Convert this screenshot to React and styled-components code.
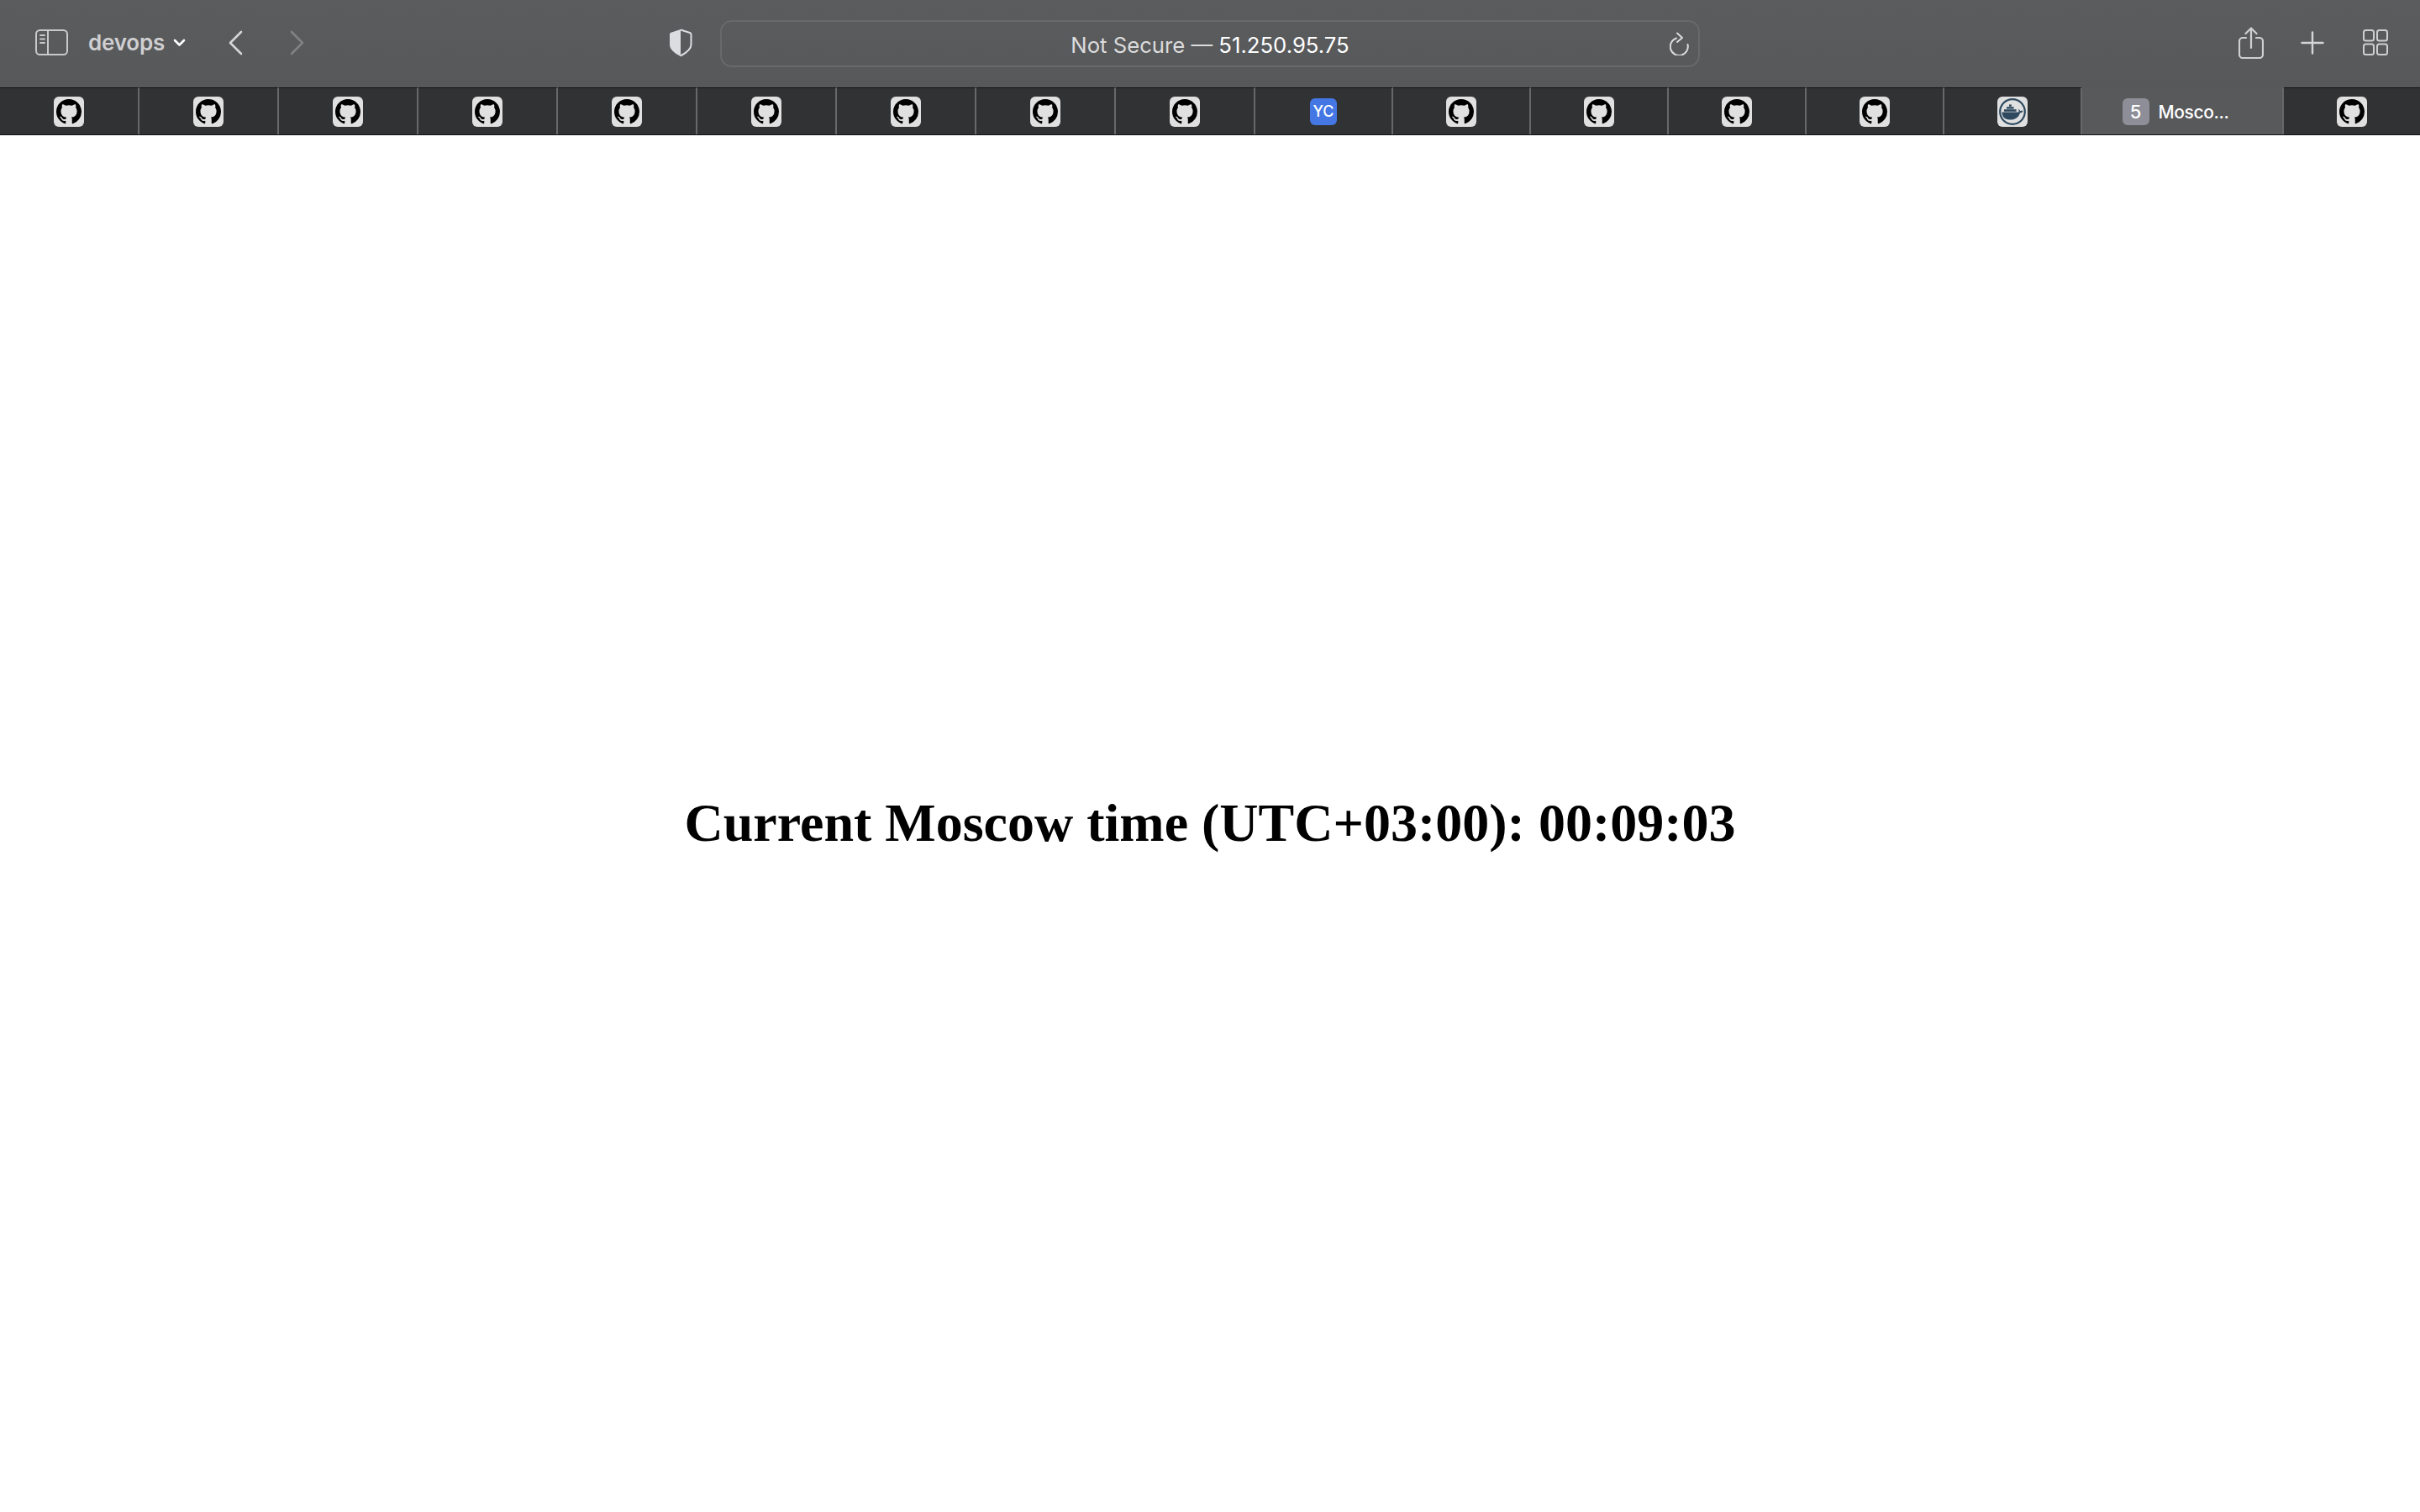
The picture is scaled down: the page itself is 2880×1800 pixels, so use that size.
import React from 'react';
import styled, { createGlobalStyle } from 'styled-components';

const GlobalStyle = createGlobalStyle`
  html, body {
    margin: 0;
    padding: 0;
    background: #fff;
  }
  * {
    box-sizing: border-box;
  }
`;

const Page = styled.div`
  display: flex;
  flex-direction: column;
  width: 2880px;
  height: 1800px;
  overflow: hidden;
  font-family: Inter, "Liberation Sans", sans-serif;
`;

const Toolbar = styled.header`
  display: grid;
  grid-template-columns: 857px 1166px 1fr;
  align-items: center;
  height: 104px;
  background: linear-gradient(#5b5c5e, #57585a);
`;

const LeftGroup = styled.div`
  display: flex;
  align-items: center;
  padding-left: 42px;
  padding-bottom: 3px;
`;

const GroupName = styled.span`
  margin-left: 24px;
  font-size: 26px;
  font-weight: 600;
  color: #cfcfd1;
  letter-spacing: -0.2px;
`;

const NavIcon = styled.svg`
  display: block;
  flex: none;
  margin-left: ${(p) => p.$gap}px;
`;

const ShieldIcon = styled.svg`
  display: block;
  margin-left: auto;
  margin-right: 33px;
`;

const AddressBar = styled.div`
  position: relative;
  display: flex;
  align-items: center;
  justify-content: center;
  height: 56px;
  padding-top: 2px;
  border: 2px solid #69696c;
  border-radius: 14px;
  font-size: 25.7px;
  color: #dcdcdd;
`;

const Host = styled.span`
  color: #fff;
`;

const ReloadButton = styled.svg`
  position: absolute;
  right: 10px;
  top: 12px;
`;

const RightGroup = styled.div`
  display: flex;
  align-items: center;
  padding-left: 641px;
  padding-bottom: 3px;
`;

const TabBar = styled.nav`
  display: flex;
  height: 57px;
  background: #313234;
  border-bottom: 1px solid #111;
`;

const Tab = styled.div`
  display: flex;
  flex: none;
  align-items: center;
  justify-content: center;
  gap: 11px;
  width: ${(p) => p.$width}px;
  padding-top: 9px;
  padding-bottom: 9px;
  padding-right: ${(p) => (p.$active ? 16 : 0)}px;
  border-top: 1px solid ${(p) => (p.$active ? '#58595b' : '#111')};
  border-right: 2px solid ${(p) => (p.$last ? 'transparent' : '#68686a')};
  background: ${(p) => (p.$active ? '#58595b' : 'transparent')};
`;

const Favicon = styled.span`
  display: flex;
  align-items: center;
  justify-content: center;
  width: 36px;
  height: 36px;
  border-radius: 6px;
  background: #e0e0e0;
`;

const LetterIcon = styled.span`
  display: flex;
  align-items: center;
  justify-content: center;
  width: 32px;
  height: 32px;
  border-radius: 6px;
  background: ${(p) => p.$bg};
  color: #fff;
  font-size: ${(p) => p.$size}px;
  font-weight: 500;
`;

const TabTitle = styled.span`
  padding-top: 1px;
  font-size: 21px;
  font-weight: 500;
  letter-spacing: -0.4px;
  color: #fff;
`;

const Content = styled.main`
  display: flex;
  flex: 1;
  align-items: center;
  justify-content: center;
  padding-bottom: 2px;
  background: #fff;
`;

const Clock = styled.h1`
  margin: 0;
  font-family: "Liberation Serif", "Times New Roman", serif;
  font-size: 64px;
  font-weight: 700;
  color: #000;
`;

const GITHUB_PATH =
  'M8 0C3.58 0 0 3.58 0 8c0 3.54 2.29 6.53 5.47 7.59.4.07.55-.17.55-.38 0-.19-.01-.82-.01-1.49-2.01.37-2.53-.49-2.69-.94-.09-.23-.48-.94-.82-1.13-.28-.15-.68-.52-.01-.53.63-.01 1.08.58 1.23.82.72 1.21 1.87.87 2.33.66.07-.52.28-.87.51-1.07-1.78-.2-3.64-.89-3.64-3.95 0-.87.31-1.59.82-2.15-.08-.2-.36-1.02.08-2.12 0 0 .67-.21 2.2.82.64-.18 1.32-.27 2-.27.68 0 1.36.09 2 .27 1.53-1.04 2.2-.82 2.2-.82.44 1.1.16 1.92.08 2.12.51.56.82 1.27.82 2.15 0 3.07-1.87 3.75-3.65 3.95.29.25.54.73.54 1.48 0 1.07-.01 1.93-.01 2.2 0 .21.15.46.55.38A8.013 8.013 0 0016 8c0-4.42-3.58-8-8-8z';

const GithubFavicon = () => (
  <Favicon>
    <svg width="30" height="30" viewBox="0 0 16 16">
      <path d={GITHUB_PATH} fill="#000" />
    </svg>
  </Favicon>
);

const DockerFavicon = () => (
  <Favicon>
    <svg width="36" height="36" viewBox="0 0 36 36">
      <circle cx="18" cy="18" r="14.8" fill="none" stroke="#2f4a5f" strokeWidth="2.2" />
      <g fill="#2f4a5f">
        <path d="M5.5 18.6h20c.3-1.4.1-2.8-.8-3.9 1.1.4 2.2 1.3 2.7 2.5 1-.5 2.2-.5 3.1 0-.7 1.5-1.9 2.2-3.5 2.2C25.6 24.6 21 27.6 14.6 27.6 8.6 27.6 5.5 23.8 5.5 18.6z" />
        <rect x="8" y="15.2" width="14.6" height="2.6" />
        <rect x="11" y="12.2" width="8.6" height="2.4" />
        <rect x="14" y="9.4" width="2.8" height="2.4" />
      </g>
    </svg>
  </Favicon>
);

const SidebarIcon = () => (
  <NavIcon $gap={0} width="39" height="31" viewBox="0 0 39 31" fill="none" stroke="#c9c9cb" strokeWidth="2">
    <rect x="1" y="1" width="37" height="29" rx="4.5" />
    <path d="M15 1v29" />
    <path d="M6 7h5M6 11.5h5M6 16h5" strokeLinecap="round" />
  </NavIcon>
);

const tabs = [
  ...Array.from({ length: 9 }, () => ({ kind: 'github', width: 166 })),
  { kind: 'yc', width: 164 },
  ...Array.from({ length: 4 }, () => ({ kind: 'github', width: 164 })),
  { kind: 'docker', width: 164 },
  { kind: 'active', width: 240 },
  { kind: 'github', width: 163 },
];

const renderTabIcon = (kind) => {
  if (kind === 'yc') return <LetterIcon $bg="#4477e4" $size={18}>YC</LetterIcon>;
  if (kind === 'docker') return <DockerFavicon />;
  if (kind === 'active') {
    return (
      <>
        <LetterIcon $bg="#8e8e98" $size={22}>5</LetterIcon>
        <TabTitle>Mosco...</TabTitle>
      </>
    );
  }
  return <GithubFavicon />;
};

export default function App() {
  return (
    <Page>
      <GlobalStyle />
      <Toolbar>
        <LeftGroup>
          <SidebarIcon />
          <GroupName>devops</GroupName>
          <NavIcon $gap={10} width="15" height="10" viewBox="0 0 15 10" fill="none" stroke="#fff" strokeWidth="2.6" strokeLinecap="round" strokeLinejoin="round">
            <path d="M2 2l5.5 5.5L13 2" />
          </NavIcon>
          <NavIcon $gap={50} width="18" height="30" viewBox="0 0 18 30" fill="none" stroke="#d6d6d8" strokeWidth="2.6" strokeLinecap="round" strokeLinejoin="round">
            <path d="M16 2L3 15l13 13" />
          </NavIcon>
          <NavIcon $gap={56} width="18" height="30" viewBox="0 0 18 30" fill="none" stroke="#818284" strokeWidth="2.6" strokeLinecap="round" strokeLinejoin="round">
            <path d="M2 2l13 13L2 28" />
          </NavIcon>
          <ShieldIcon width="28" height="34" viewBox="0 0 28 34">
            <path d="M14 1.5L25 5c1 .3 1.5 1 1.5 2v12c0 5-5 9.500-12.500 13.500" fill="none" stroke="#dcdde0" strokeWidth="2" />
            <path d="M14 1L2.500 4.700C1.500 5 1 5.700 1 6.700V19c0 5.500 5 10 13 14z" fill="#dcdde0" />
          </ShieldIcon>
        </LeftGroup>

        <AddressBar>
          <span>
            Not Secure — <Host>51.250.95.75</Host>
          </span>
          <ReloadButton width="24" height="28" viewBox="0 0 24 28" fill="none" stroke="#dcdcdd" strokeWidth="2" strokeLinecap="round" strokeLinejoin="round">
            <path d="M8 7.500A10.500 10.500 0 1 0 21.500 15" />
            <path d="M9 1.500l6 5.500-6 5" />
          </ReloadButton>
        </AddressBar>

        <RightGroup>
          <NavIcon $gap={0} width="30" height="38" viewBox="0 0 30 38" fill="none" stroke="#d0d0d2" strokeWidth="2.200" strokeLinecap="round" strokeLinejoin="round">
            <path d="M9 13H5a4 4 0 0 0-4 4v16a4 4 0 0 0 4 4h20a4 4 0 0 0 4-4V17a4 4 0 0 0-4-4h-4" />
            <path d="M15 25V2M8.500 8L15 1.500 21.500 8" />
          </NavIcon>
          <NavIcon $gap={44} width="28" height="28" viewBox="0 0 28 28" fill="none" stroke="#d6d6d8" strokeWidth="2.400" strokeLinecap="round">
            <path d="M14 1.500v25M1.500 14h25" />
          </NavIcon>
          <NavIcon $gap={46} width="30" height="31" viewBox="0 0 30 31" fill="none" stroke="#cfcfd1" strokeWidth="2">
            <rect x="1" y="1" width="12" height="12.500" rx="2.500" />
            <rect x="17" y="1" width="12" height="12.500" rx="2.500" />
            <rect x="1" y="17.500" width="12" height="12.500" rx="2.500" />
            <rect x="17" y="17.500" width="12" height="12.500" rx="2.500" />
          </NavIcon>
        </RightGroup>
      </Toolbar>

      <TabBar>
        {tabs.map((tab, i) => (
          <Tab
            key={i}
            $width={tab.width}
            $active={tab.kind === 'active'}
            $last={i === tabs.length - 1}
          >
            {renderTabIcon(tab.kind)}
          </Tab>
        ))}
      </TabBar>

      <Content>
        <Clock>Current Moscow time (UTC+03:00): 00:09:03</Clock>
      </Content>
    </Page>
  );
}
